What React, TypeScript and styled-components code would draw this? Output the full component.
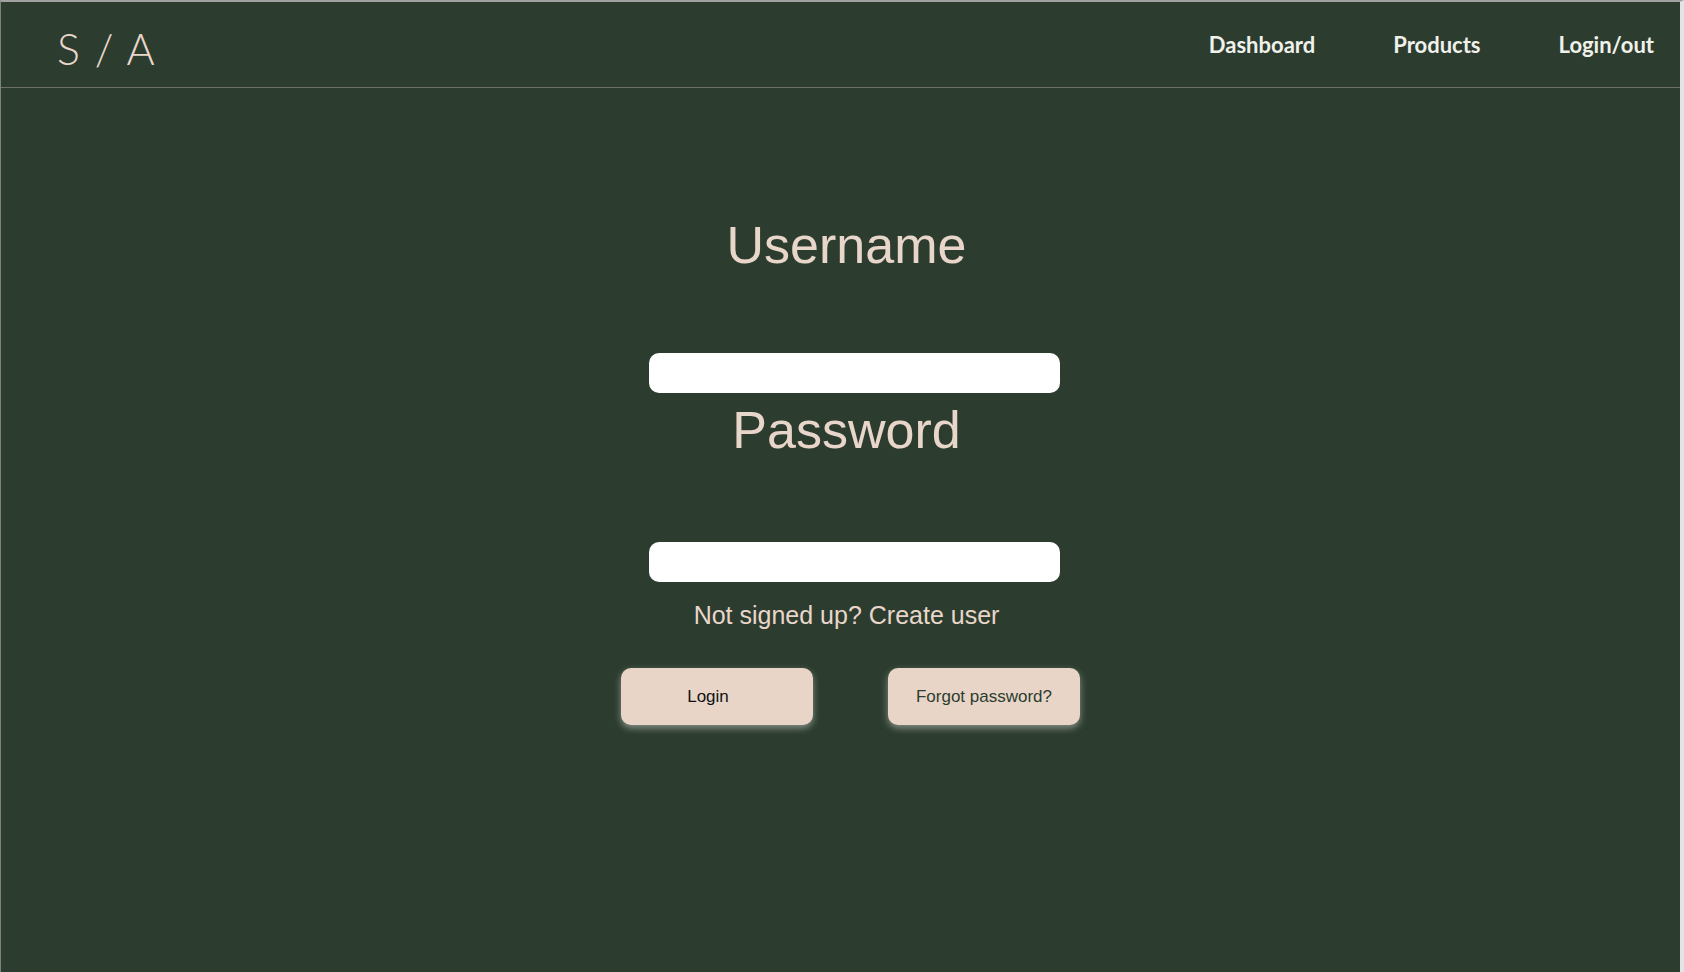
import styled, { createGlobalStyle } from "styled-components";

const GlobalStyle = createGlobalStyle`
  html, body {
    margin: 0;
    padding: 0;
    background: #e4e4e4;
  }
  * {
    box-sizing: border-box;
  }
`;

const Frame = styled.div`
  height: 972px;
  display: flex;
  flex-direction: column;
  background: #2c3d2f;
  border-top: 2px solid #a2a2a2;
  border-left: 1px solid #808080;
  border-right: 4px solid #e4e4e4;
`;

const Header = styled.header`
  height: 86px;
  flex-shrink: 0;
  display: flex;
  align-items: center;
  justify-content: space-between;
  padding: 0 26px 0 56px;
  border-bottom: 1px solid #6c716b;
`;

const Logo = styled.div`
  font-family: "Lato", "Open Sans", sans-serif;
  font-weight: 300;
  font-size: 43px;
  letter-spacing: 1.5px;
  color: #e9d6ca;
  padding-top: 8px;
`;

const Nav = styled.nav`
  display: flex;
  align-items: center;
  gap: 78px;
`;

const NavLink = styled.a`
  font-family: "Lato", "Open Sans", sans-serif;
  font-weight: 700;
  font-size: 22px;
  color: #f1f1ec;
  text-decoration: none;
  cursor: pointer;
`;

const Main = styled.main`
  flex: 1;
  display: flex;
  flex-direction: column;
  align-items: center;
  padding: 127px 0 0 12px;
  font-family: "Liberation Sans", Arial, sans-serif;
`;

const Label = styled.label<{ $gap: number }>`
  font-size: 52px;
  line-height: 60px;
  color: #e9d6ca;
  margin-bottom: ${(p) => p.$gap}px;
`;

const Field = styled.input`
  width: 411px;
  height: 40px;
  margin-left: 16px;
  border: none;
  border-radius: 10px;
  background: #ffffff;
  outline: none;
  padding: 0 12px;
  font-size: 18px;
`;

const SignUp = styled.a`
  margin-top: 19px;
  font-size: 25px;
  line-height: 29px;
  color: #e9d6ca;
  cursor: pointer;
`;

const ButtonRow = styled.div`
  display: flex;
  gap: 75px;
  margin: 38px 0 0 8px;
`;

const Button = styled.button<{ $dark?: boolean }>`
  width: 192px;
  height: 57px;
  border: none;
  border-radius: 10px;
  background: #e8d5c8;
  box-shadow: 0 3px 7px rgba(215, 215, 210, 0.55);
  font-family: "Liberation Sans", Arial, sans-serif;
  font-size: 17px;
  color: ${(p) => (p.$dark ? "#2c3d2f" : "#111111")};
  padding: ${(p) => (p.$dark ? "0" : "0 18px 0 0")};
  cursor: pointer;
`;

export default function App() {
  return (
    <>
      <GlobalStyle />
      <Frame>
        <Header>
          <Logo>S / A</Logo>
          <Nav>
            <NavLink>Dashboard</NavLink>
            <NavLink>Products</NavLink>
            <NavLink>Login/out</NavLink>
          </Nav>
        </Header>
        <Main>
          <Label $gap={78}>Username</Label>
          <Field type="text" />
          <Label $gap={82} style={{ marginTop: 7 }}>
            Password
          </Label>
          <Field type="password" />
          <SignUp>Not signed up? Create user</SignUp>
          <ButtonRow>
            <Button>Login</Button>
            <Button $dark>Forgot password?</Button>
          </ButtonRow>
        </Main>
      </Frame>
    </>
  );
}
